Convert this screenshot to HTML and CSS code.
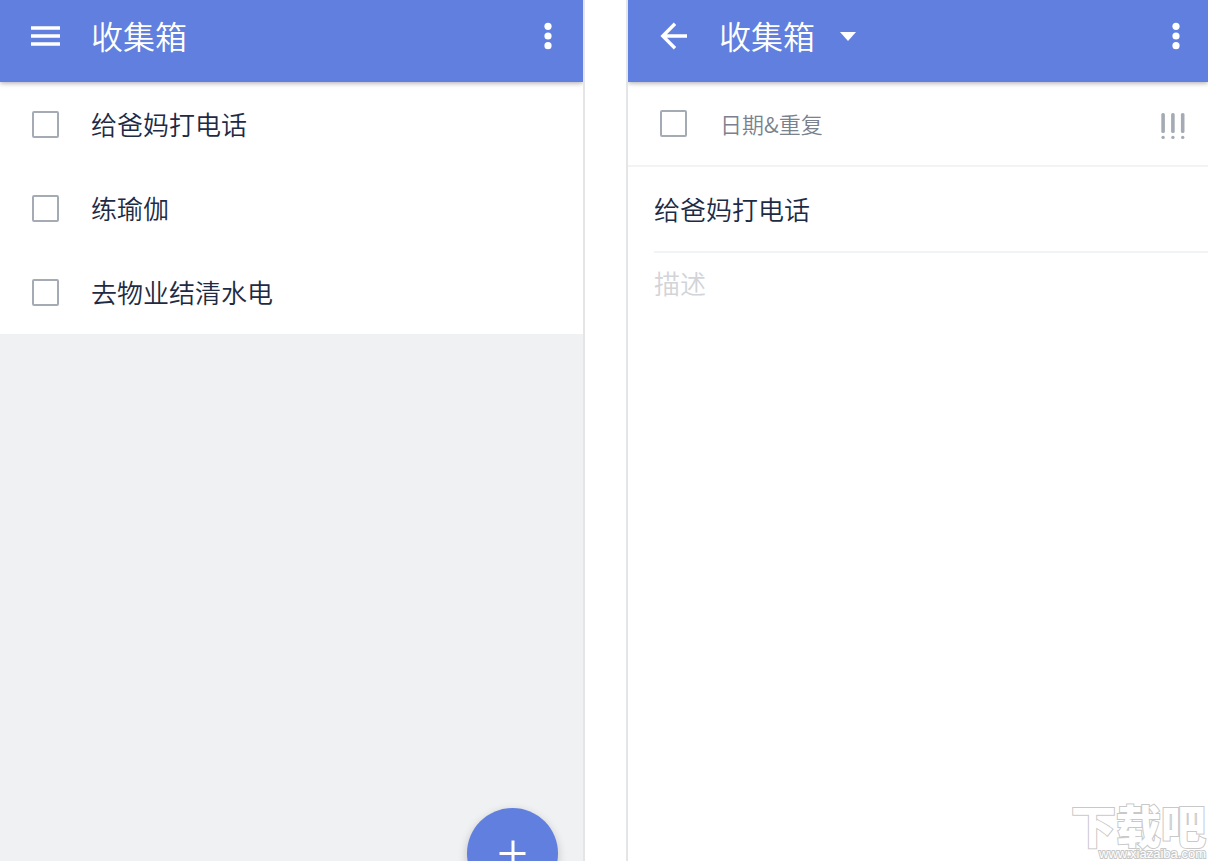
FILE: index.html
```html
<!DOCTYPE html>
<html lang="zh-CN">
<head>
<meta charset="utf-8">
<meta name="viewport" content="width=device-width, initial-scale=1">
<title>收集箱</title>
<link rel="stylesheet" href="styles.css">
</head>
<body>
<div class="screens">
  <section class="screen screen-list">
    <header class="appbar">
      <button class="icon-btn" type="button" aria-label="菜单">
        <svg width="32" height="32" viewBox="0 0 32 32"><path d="M1 8h29M1 16h29M1 24h29" stroke="currentColor" stroke-width="3.4" fill="none"/></svg>
      </button>
      <h1 class="title">收集箱</h1>
      <button class="icon-btn more" type="button" aria-label="更多">
        <svg width="32" height="32" viewBox="0 0 32 32" fill="currentColor"><circle cx="16" cy="6.3" r="3.6"/><circle cx="16" cy="16" r="3.6"/><circle cx="16" cy="25.7" r="3.6"/></svg>
      </button>
    </header>
    <ul class="tasks">
      <li class="row"><input class="check" type="checkbox" id="t1"><label class="task" for="t1">给爸妈打电话</label></li>
      <li class="row"><input class="check" type="checkbox" id="t2"><label class="task" for="t2">练瑜伽</label></li>
      <li class="row"><input class="check" type="checkbox" id="t3"><label class="task" for="t3">去物业结清水电</label></li>
    </ul>
    <button class="fab" type="button" aria-label="添加">
      <svg width="28" height="28" viewBox="0 0 28 28"><path d="M14 0.5v26M0.5 13.5h26" stroke="currentColor" stroke-width="3" fill="none"/></svg>
    </button>
  </section>

  <section class="screen screen-detail">
    <header class="appbar">
      <button class="icon-btn" type="button" aria-label="返回">
        <svg width="32" height="32" viewBox="0 0 32 32"><path d="M29 16H5M17 3.8L4.8 16L17 28.2" stroke="currentColor" stroke-width="3.4" fill="none"/></svg>
      </button>
      <h1 class="title">收集箱</h1>
      <button class="icon-btn" type="button" aria-label="切换清单">
        <svg width="16" height="32" viewBox="0 0 16 32"><path d="M0 12h16l-8 9z" fill="currentColor"/></svg>
      </button>
      <button class="icon-btn more" type="button" aria-label="更多">
        <svg width="32" height="32" viewBox="0 0 32 32" fill="currentColor"><circle cx="16" cy="6.3" r="3.6"/><circle cx="16" cy="16" r="3.6"/><circle cx="16" cy="25.7" r="3.6"/></svg>
      </button>
    </header>
    <div class="row row-date">
      <input class="check" type="checkbox" id="done" aria-label="完成">
      <button class="date" type="button">日期&amp;重复</button>
      <button class="icon-btn priority" type="button" aria-label="优先级">
        <svg width="26" height="28" viewBox="0 0 26 28" fill="currentColor"><rect x="1.3" y="1" width="3.6" height="20" rx="1.6"/><rect x="11.1" y="1" width="3.6" height="20" rx="1.6"/><rect x="20.9" y="1" width="3.6" height="20" rx="1.6"/><circle cx="3.1" cy="25.4" r="1.7"/><circle cx="12.9" cy="25.4" r="1.7"/><circle cx="22.7" cy="25.4" r="1.7"/></svg>
      </button>
    </div>
    <div class="fields">
      <input class="field field-title" type="text" aria-label="标题" value="给爸妈打电话">
      <textarea class="field field-desc" aria-label="描述" placeholder="描述"></textarea>
    </div>
    <div class="watermark">
      <span class="mark-name">下载吧</span>
      <span class="mark-url">www.xiazaiba.com</span>
    </div>
  </section>
</div>
</body>
</html>
```
FILE: styles.css
```css
* {
  box-sizing: border-box;
}

body {
  margin: 0;
  background: #fff;
  color: #1d2b44;
  font-family: "Noto Sans CJK SC", sans-serif;
  font-weight: 350;
}

button,
input,
textarea {
  margin: 0;
  padding: 0;
  border: 0;
  background: none;
  color: inherit;
  font: inherit;
}

.screens {
  display: grid;
  grid-template-columns: 585fr 582fr;
  gap: 41px;
  height: 100vh;
  overflow: hidden;
}

.screen {
  position: relative;
  display: flex;
  flex-direction: column;
  min-width: 0;
  overflow: hidden;
}

.screen-list {
  border-right: 2px solid #e4e5e6;
  background: #f0f1f3;
}

.screen-detail {
  border-left: 2px solid #e4e5e6;
}

.appbar {
  position: relative;
  z-index: 1;
  display: flex;
  flex: none;
  align-items: center;
  height: 82px;
  padding: 0 19px 10px 30px;
  background: #617fde;
  color: #fff;
  box-shadow: 0 1px 5px rgba(0, 0, 0, 0.35);
}

.screen-detail .appbar {
  padding-right: 16px;
}

.icon-btn {
  display: flex;
  flex: none;
}

.title {
  margin: 0 25px 0 29px;
  padding-bottom: 2px;
  font-size: 32px;
  line-height: 48px;
  font-weight: 350;
}

.more {
  margin-left: auto;
}

.tasks {
  margin: 0;
  padding: 0;
  background: #fff;
  list-style: none;
}

.row {
  display: flex;
  align-items: center;
  height: 84px;
  padding: 0 22px 0 32px;
}

.check {
  flex: none;
  width: 27px;
  height: 27px;
  border: 2px solid #a5abb5;
  border-radius: 2px;
  appearance: none;
}

.check:checked {
  background: #617fde;
}

.task {
  margin-left: 32px;
  font-size: 26px;
  line-height: 40px;
}

.row-date {
  height: 85px;
  border-bottom: 2px solid #f2f3f4;
}

.date {
  margin-left: 33px;
  padding-bottom: 2px;
  color: #7b828d;
  font-size: 22px;
  line-height: 32px;
}

.priority {
  margin-left: auto;
  padding-top: 4px;
  color: #a5abb5;
}

.fields {
  display: flex;
  flex: 1;
  flex-direction: column;
  padding-left: 26px;
}

.field {
  width: 100%;
  font-size: 26px;
  line-height: 40px;
  outline: none;
}

.field-title {
  height: 86px;
  padding-bottom: 2px;
  border-bottom: 2px solid #f2f3f4;
}

.field-desc {
  flex: 1;
  padding-top: 10px;
  resize: none;
}

.field-desc::placeholder {
  color: #d2d4d8;
}

.fab {
  position: absolute;
  right: 25px;
  bottom: -38px;
  display: grid;
  place-items: center;
  width: 91px;
  height: 91px;
  border-radius: 50%;
  background: #617fde;
  color: #fff;
  box-shadow: 0 3px 10px rgba(0, 0, 0, 0.2);
}

.watermark {
  position: absolute;
  right: 2px;
  bottom: 0;
  display: flex;
  flex-direction: column;
  align-items: flex-end;
  color: #fff;
  paint-order: stroke fill;
  pointer-events: none;
}

.mark-name {
  font-size: 45px;
  line-height: 44px;
  font-weight: 900;
  -webkit-text-stroke: 2px #c8c8c8;
}

.mark-url {
  font-family: "Liberation Sans", Arial, sans-serif;
  font-size: 13px;
  line-height: 14px;
  font-weight: 400;
  -webkit-text-stroke: 2px #c8c8c8;
}
```
